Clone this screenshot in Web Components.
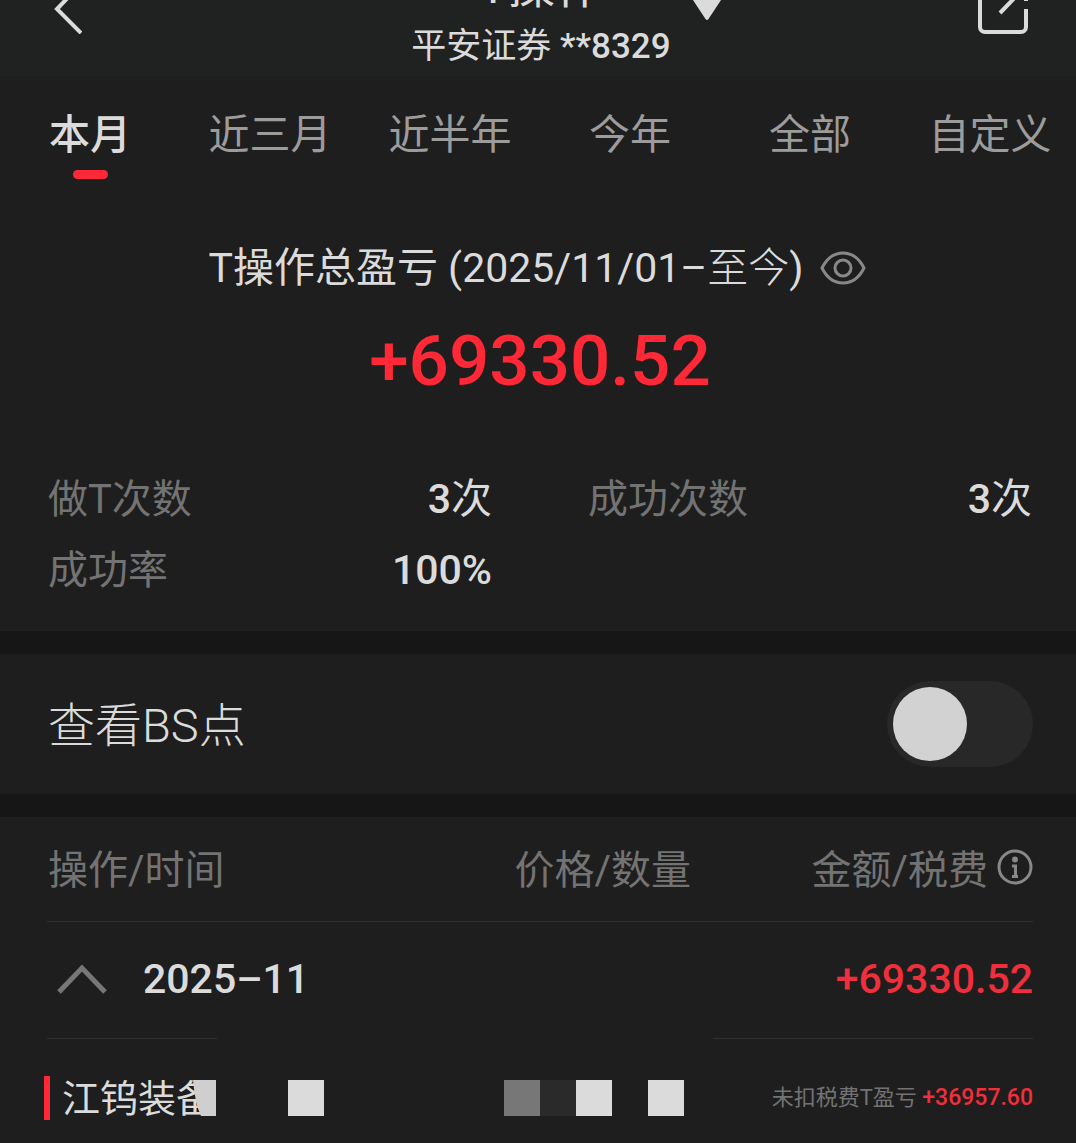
<!DOCTYPE html>
<html lang="zh-CN">
<head>
<meta charset="utf-8">
<meta name="viewport" content="width=device-width, initial-scale=1">
<title>T操作</title>
<style>
  :root {
    --bg: #1e1e1e;
    --bg-header: #202221;
    --bg-gap: #161616;
    --line: #303030;
    --text: #dbdbdb;
    --text-muted: #9c9c9c;
    --text-dim: #737373;
    --up: #ff2837;
    --size-body: 41px;
    --size-label: 40px;
  }
  body {
    margin: 0;
    background: var(--bg);
    color: var(--text);
    font-family: Roboto, "Noto Sans CJK SC", sans-serif;
    font-size: var(--size-body);
    font-weight: 400;
    overflow-x: hidden;
  }
  .number { font-weight: 500; }
  .light { font-weight: 300; }
</style>
</head>
<body>

<app-header>
  <span slot="title">T操作</span>
  <span slot="account">平安证券 <span class="number">**8329</span></span>
</app-header>

<main>
  <period-tabs>
    <period-tab active>本月</period-tab>
    <period-tab>近三月</period-tab>
    <period-tab>近半年</period-tab>
    <period-tab>今年</period-tab>
    <period-tab>全部</period-tab>
    <period-tab>自定义</period-tab>
  </period-tabs>

  <profit-summary>
    <span slot="title">T操作总盈亏 (2025/11/01–<span class="light">至今</span>)</span>
    <span slot="amount">+69330.52</span>
    <stat-item label="做T次数"><b>3</b>次</stat-item>
    <stat-item label="成功次数"><b>3</b>次</stat-item>
    <stat-item label="成功率"><b>100%</b></stat-item>
  </profit-summary>

  <switch-row>查看BS点</switch-row>

  <trade-table></trade-table>
</main>

<script>
/* ---- shared base: clones a template into an open shadow root ---- */
const template = (html) => {
  const t = document.createElement('template');
  t.innerHTML = html;
  return t;
};

class BaseElement extends HTMLElement {
  constructor() {
    super();
    this.attachShadow({ mode: 'open' })
      .appendChild(this.constructor.template.content.cloneNode(true));
  }
}

/* ---- app-header: back, title + account picker, share ---- */
class AppHeader extends BaseElement {
  static template = template(`
    <style>
      :host { display: block; }
      header {
        display: flex;
        align-items: flex-end;
        justify-content: space-between;
        box-sizing: border-box;
        height: 76px;
        padding: 0 48px 0 54px;
        overflow: hidden;
        background: var(--bg-header);
      }
      button {
        display: flex;
        padding: 0;
        border: 0;
        background: none;
        color: inherit;
        font: inherit;
      }
      .icon { width: 50px; margin-bottom: 42px; }
      .account {
        display: flex;
        flex-direction: column;
        align-items: center;
        padding-bottom: 5px;
      }
      .title {
        display: grid;
        grid-template-columns: 1fr auto 1fr;
        align-items: end;
        align-self: stretch;
        font-size: 48px;
        line-height: 72px;
      }
      .name { grid-column: 2; }
      .arrow { width: 0; overflow: visible; }
      .arrow svg { margin-left: 88px; }
      .number { font-size: 35px; line-height: 48px; white-space: nowrap; }
      svg { display: block; flex: none; }
    </style>
    <header>
      <button class="icon" type="button" aria-label="返回">
        <svg width="28" height="50" viewBox="0 0 28 50" fill="none" stroke="currentColor" stroke-width="4">
          <path d="M27 0 3 25 27 49"/>
        </svg>
      </button>
      <button class="account" type="button">
        <span class="title">
          <span class="name"><slot name="title"></slot></span>
          <span class="arrow">
            <svg width="32" height="72" viewBox="0 0 32 72" fill="currentColor">
              <path d="M0 46h32L17.500 68q-1.500 2-3 0z"/>
            </svg>
          </span>
        </span>
        <span class="number"><slot name="account"></slot></span>
      </button>
      <button class="icon" type="button" aria-label="分享">
        <svg width="50" height="50" viewBox="0 0 50 50" fill="none" stroke="currentColor" stroke-width="4">
          <path d="M48 25v18a5 5 0 0 1-5 5H7a5 5 0 0 1-5-5V7a5 5 0 0 1 5-5h18M32 2h16v15M22 29 47 3"/>
        </svg>
      </button>
    </header>
  `);
}
customElements.define('app-header', AppHeader);

/* ---- period-tab / period-tabs ---- */
class PeriodTab extends BaseElement {
  static template = template(`
    <style>
      :host { display: block; flex: 0 0 180px; }
      button {
        display: flex;
        flex-direction: column;
        align-items: center;
        gap: 5px;
        width: 100%;
        padding: 0;
        border: 0;
        background: none;
        color: var(--text-muted);
        font: inherit;
        line-height: 60px;
        white-space: nowrap;
      }
      button::after {
        content: "";
        width: 35px;
        height: 9px;
        border-radius: 5px;
      }
      :host([active]) button { color: var(--text); font-weight: 500; }
      :host([active]) button::after { background: var(--up); }
    </style>
    <button type="button" role="tab"><slot></slot></button>
  `);

  connectedCallback() {
    this.shadowRoot.querySelector('button')
      .setAttribute('aria-selected', String(this.hasAttribute('active')));
  }
}
customElements.define('period-tab', PeriodTab);

class PeriodTabs extends BaseElement {
  static template = template(`
    <style>
      :host { display: block; }
      nav { display: flex; padding-top: 29px; overflow: hidden; }
    </style>
    <nav role="tablist" aria-label="时间范围"><slot></slot></nav>
  `);
}
customElements.define('period-tabs', PeriodTabs);

/* ---- stat-item: dim label on the left, value on the right ---- */
class StatItem extends BaseElement {
  static template = template(`
    <style>
      :host {
        display: flex;
        justify-content: space-between;
        line-height: 71px;
        white-space: nowrap;
      }
      .label { color: var(--text-dim); font-size: var(--size-label); }
      ::slotted(b) { font-weight: 500; }
    </style>
    <span class="label"></span>
    <span class="value"><slot></slot></span>
  `);

  connectedCallback() {
    this.shadowRoot.querySelector('.label').textContent = this.getAttribute('label');
  }
}
customElements.define('stat-item', StatItem);

/* ---- profit-summary ---- */
class ProfitSummary extends BaseElement {
  static template = template(`
    <style>
      :host {
        display: block;
        padding: 61px 44px 25px 48px;
        border-bottom: 23px solid var(--bg-gap);
      }
      .title {
        display: flex;
        align-items: center;
        justify-content: center;
        gap: 16px;
        padding-right: 6px;
        line-height: 56px;
        white-space: nowrap;
      }
      button {
        display: flex;
        padding: 0;
        border: 0;
        background: none;
        color: #888;
      }
      .amount {
        margin-top: 25px;
        color: var(--up);
        font-size: 71px;
        font-weight: 500;
        line-height: 80px;
        text-align: center;
      }
      .stats {
        display: grid;
        grid-template-columns: 1fr 1fr;
        column-gap: 96px;
        margin-top: 63px;
      }
    </style>
    <section>
      <div class="title">
        <slot name="title"></slot>
        <button type="button" aria-label="隐藏金额">
          <svg width="46" height="34" viewBox="0 0 46 34" fill="none" stroke="currentColor" stroke-width="3">
            <path d="M2 17C7 7 14 2 23 2s16 5 21 15c-5 10-12 15-21 15S7 27 2 17z"/>
            <circle cx="23" cy="17" r="8"/>
          </svg>
        </button>
      </div>
      <div class="amount"><slot name="amount"></slot></div>
      <div class="stats"><slot></slot></div>
    </section>
  `);
}
customElements.define('profit-summary', ProfitSummary);

/* ---- switch-row: label + toggle ---- */
class SwitchRow extends BaseElement {
  static template = template(`
    <style>
      :host {
        display: block;
        border-bottom: 23px solid var(--bg-gap);
      }
      label {
        display: flex;
        align-items: center;
        justify-content: space-between;
        height: 140px;
        padding: 0 43px 0 48px;
        font-size: 47px;
        font-weight: 300;
      }
      span { padding-bottom: 6px; }
      input {
        appearance: none;
        box-sizing: border-box;
        width: 146px;
        height: 86px;
        margin: 0;
        padding: 6px;
        border-radius: 43px;
        background: #282828;
      }
      input::before {
        content: "";
        display: block;
        width: 74px;
        height: 74px;
        border-radius: 50%;
        background: #d2d2d2;
      }
      input:checked { background: var(--up); }
      input:checked::before { margin-left: auto; }
    </style>
    <label><span><slot></slot></span><input type="checkbox" role="switch"></label>
  `);
}
customElements.define('switch-row', SwitchRow);

/* ---- trade-table: monthly groups with their trades ---- */
class TradeTable extends BaseElement {
  static template = template(`
    <style>
      :host { display: block; padding: 0 43px 0 44px; }
      table {
        width: 100%;
        border-collapse: collapse;
        table-layout: fixed;
        white-space: nowrap;
      }
      th, td {
        box-sizing: border-box;
        padding: 0;
        font-weight: inherit;
        text-align: right;
      }
      th:first-child, td:first-child { text-align: left; }
      col.time { width: 30%; }
      col.amount { width: 342px; }

      thead tr {
        background: linear-gradient(var(--line), var(--line)) right bottom / calc(100% - 3px) 1px no-repeat;
      }
      thead th {
        height: 105px;
        padding-bottom: 6px;
        color: var(--text-dim);
        font-size: var(--size-label);
      }
      thead th:first-child { padding-left: 4px; }
      .fee { display: flex; align-items: center; justify-content: flex-end; gap: 9px; }
      button {
        display: flex;
        padding: 0;
        border: 0;
        background: none;
        color: inherit;
        font: inherit;
      }
      .fee button { color: #888; }

      .month {
        background:
          linear-gradient(var(--line), var(--line)) 3px bottom / 170px 1px no-repeat,
          linear-gradient(var(--line), var(--line)) right bottom / 320px 1px no-repeat;
      }
      .month td { height: 117px; padding-bottom: 4px; font-weight: 500; }
      .month td:last-child, .profit { color: #f02f3c; }
      .toggle { align-items: center; gap: 36px; padding-left: 13px; }
      .toggle svg { color: #777; }

      .trade td { height: 118px; }
      .stock {
        display: flex;
        align-items: center;
        gap: 12px;
        position: relative;
        font-size: 38px;
      }
      .stock::before {
        content: "";
        width: 6px;
        height: 44px;
        background: var(--up);
      }
      .stock span { padding-bottom: 6px; }
      /* redaction tiles lie over the end of the name */
      .mosaic { position: absolute; left: 136px; }
      .trade .net { padding-bottom: 6px; font-size: 22px; color: var(--text-dim); }
      .profit { font-size: 23px; font-weight: 500; }
    </style>
    <table>
      <colgroup><col class="time"><col><col class="amount"></colgroup>
      <thead>
        <tr>
          <th>操作/时间</th>
          <th>价格/数量</th>
          <th>
            <span class="fee">金额/税费
              <button type="button" aria-label="说明">
                <svg width="36" height="36" viewBox="0 0 36 36" fill="none" stroke="currentColor" stroke-width="3">
                  <circle cx="18" cy="18" r="16"/>
                  <circle cx="18" cy="10.500" r="3" fill="currentColor" stroke="none"/>
                  <path d="M15 17h3.500v10M15 27.500h6"/>
                </svg>
              </button>
            </span>
          </th>
        </tr>
      </thead>
      <tbody>
        <tr class="month">
          <td colspan="2">
            <button class="toggle" type="button" aria-expanded="true">
              <svg width="50" height="30" viewBox="0 0 50 30" fill="none" stroke="currentColor" stroke-width="5">
                <path d="M2 28 25 4l23 24"/>
              </svg>
              2025–11
            </button>
          </td>
          <td>+69330.52</td>
        </tr>
        <tr class="trade">
          <td colspan="2">
            <div class="stock">
              <span>江钨装备</span>
              <svg class="mosaic" width="504" height="36" viewBox="0 0 504 36" fill="#dbdbdb">
                <path d="M13 0h23v36H21q-6-12-8-36z" fill="#cfcfcf"/>
                <path d="M108 0h36v36h-36z"/>
                <path d="M324 0h36v36h-36z" fill="#777"/>
                <path d="M360 0h36v36h-36z" fill="#2a2a2a"/>
                <path d="M396 0h36v36h-36z"/>
                <path d="M468 0h36v36h-36z"/>
              </svg>
            </div>
          </td>
          <td class="net">未扣税费T盈亏 <span class="profit">+36957.60</span></td>
        </tr>
      </tbody>
    </table>
  `);
}
customElements.define('trade-table', TradeTable);
</script>
</body>
</html>
